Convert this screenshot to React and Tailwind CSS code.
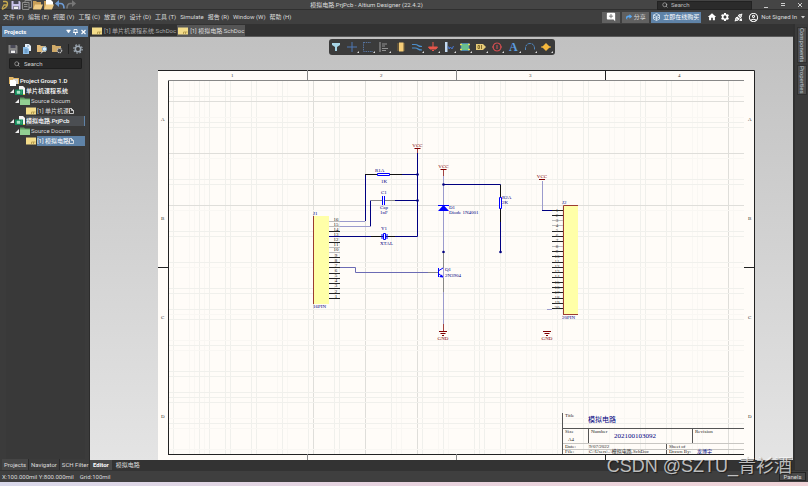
import clsx from 'clsx'
import { LuSearch } from 'react-icons/lu'
import { MdAddComment, MdHome, MdOutlineAccountCircle, MdSettings } from 'react-icons/md'
import { FaShare } from 'react-icons/fa'
import { TbPlugConnectedX } from 'react-icons/tb'

const menus = [
  '文件 (F)',
  '编辑 (E)',
  '视图 (V)',
  '工程 (C)',
  '放置 (P)',
  '设计 (D)',
  '工具 (T)',
  'Simulate',
  '报告 (R)',
  'Window (W)',
  '帮助 (H)'
]

const tree = [
  { type: 'group', label: 'Project Group 1.D' },
  { type: 'project', label: '单片机课程系统' },
  { type: 'folder', label: 'Source Docum' },
  { type: 'sheet', label: '[1] 单片机课' },
  { type: 'project', label: '模拟电路.PrjPcb', current: true },
  { type: 'folder', label: 'Source Docum' },
  { type: 'sheet', label: '[1] 模拟电路', selected: true }
]

const indent = { group: 'pl-[3px]', project: 'pl-[4px]', folder: 'pl-[9px]', sheet: 'pl-[20px]' }

const SaveIcon = ({ color = '#c9c3ea' }) => (
  <svg viewBox="0 0 10 10" className="size-[10px]">
    <path d="M.5 1h8l1 1v7.500h-9z" fill={color} />
    <path d="M2.500 1h5v3h-5zM2.500 6h5v3.500h-5z" fill="#4a4a58" />
    <path d="M3 6.500h4v2.500h-4z" fill="#eee" />
  </svg>
)

const SaveAllIcon = () => (
  <svg viewBox="0 0 10 10" className="size-[10px]" stroke="#8b8b8b" fill="#454545">
    <path d="M3 .5h6.500v7H3z" />
    <path d="M.5 2.500h6.500v7H.5zM2 4.500h3.500M2 6.500h3.500" />
  </svg>
)

const OpenIcon = ({ paper }) => (
  <svg viewBox="0 0 10 10" className="size-[10px]">
    <path d="M0 1h3l1 1h4v7H0z" fill="#c99f58" />
    {paper && <path d="M2 0h5l2 2v4H2z" fill="#fff" />}
    <path d="M2 4.500h8l-2 5H0z" fill="#f0cd88" />
  </svg>
)

const ArrowIcon = ({ redo }) => (
  <svg viewBox="0 0 10 10" className={clsx('size-[10px]', redo && '-scale-x-100')}>
    <path d="M2 3.500h3.500q3.500 0 3.500 5" fill="none" stroke={redo ? '#777' : '#6d9cd6'} strokeWidth="1.600" />
    <path d="M0 3.500 4 0v7z" fill={redo ? '#777' : '#6d9cd6'} />
  </svg>
)

const SheetIcon = () => (
  <svg viewBox="0 0 10 8" className="h-[8px] w-[10px] shrink-0">
    <path d="M0 .5h10v7H0z" fill="#f3dc8a" />
    <path d="M5.500 5h4M5.500 5v2M7.500 5v2" stroke="#a58a3c" strokeWidth=".7" />
  </svg>
)

const TreeIcon = ({ type }) => {
  if (type === 'sheet') return <SheetIcon />
  if (type === 'folder') {
    return (
      <svg viewBox="0 0 10 8" className="h-[8px] w-[10px] shrink-0">
        <path d="M0 .5h4l1 1h5V8H0z" fill="#5f9e62" />
        <path d="M0 2.500h10V8H0z" fill="#93cf92" />
      </svg>
    )
  }
  if (type === 'group') {
    return (
      <svg viewBox="0 0 10 10" className="size-[10px] shrink-0">
        <path d="M0 1h4l1 1h5v6H0z" fill="#e3b766" />
        <path d="M1 4h5l1 1v5H1z" fill="#fff" />
        <path d="M4 3h5v5H7V5L6 4H4z" fill="#d8d8d8" />
      </svg>
    )
  }
  return (
    <svg viewBox="0 0 10 10" className="size-[10px] shrink-0">
      <path d="M4 0h4l2 2v6H4z" fill="#f4f4f4" />
      <path d="M0 3.500h8V9H0z" fill="#128a5a" />
      <path d="M2 5h3v2.500H2zM6 5h1M6 7h1" fill="#a8e0c4" stroke="#a8e0c4" strokeWidth=".5" />
      <path d="M8 8.500h2" stroke="#d8d048" />
    </svg>
  )
}

const Sidebar = () => (
  <aside className="flex w-[90px] shrink-0 flex-col border-r border-[#2d2d2d] bg-[#3b3b3b] pl-[2px]">
    <div className="mt-[2px] mr-[1px] flex h-[11px] items-center bg-[#5f83a8] px-[2px] font-bold text-white">
      <h2 className="flex-1">Projects</h2>
      <svg viewBox="0 0 20 6" className="h-[6px] w-[20px]" stroke="#fff" fill="#fff">
        <path d="M.5 1h4l-2 3z" strokeWidth=".5" />
        <path d="M8 .5h3v3H8zM7 3.500h5M9.500 3.500V6" fill="none" strokeWidth=".9" />
        <path d="m15.500 1 4 4m0-4-4 4" strokeWidth="1.200" />
      </svg>
    </div>
    <div className="mx-[4px] flex flex-1 flex-col bg-[#393939]">
      <div className="mt-[6px] flex h-[11px] items-center justify-between px-[2px]">
        <SaveIcon color="#858585" />
        <svg viewBox="0 0 10 10" className="size-[10px]">
          <path d="M3 0h4l2 2v5H3z" fill="#e8f1fa" />
          <path d="M1 3h4l2 2v5H1z" fill="#8fbfe9" />
          <path d="M2.500 6h3M2.500 8h3M5 2h2" stroke="#33638f" strokeWidth=".7" />
        </svg>
        <svg viewBox="0 0 11 10" className="h-[10px] w-[11px]">
          <path d="M0 1h3l1 1h5v6H0z" fill="#e0b978" />
          <circle cx="7.500" cy="5" r="2.200" fill="#d9efff" stroke="#84aaca" />
          <path d="M6 7 4 9.500" stroke="#ddd" />
        </svg>
        <svg viewBox="0 0 11 10" className="h-[10px] w-[11px]">
          <path d="M0 1h3l1 1h5v6H0z" fill="#d0aa68" />
          <circle cx="7.500" cy="6.500" r="2.200" fill="#444" stroke="#bbb" strokeWidth="1.200" strokeDasharray="1.200 .5" />
        </svg>
        <span className="h-[10px] border-l border-[#222]" />
        <svg viewBox="0 0 10 10" className="size-[10px]" fill="none" stroke="#9da8b3">
          <circle cx="5" cy="5" r="2.700" strokeWidth="1.600" />
          <circle cx="5" cy="5" r="4.200" strokeWidth="1.200" strokeDasharray="1.650 1.650" />
        </svg>
      </div>
      <label className="mx-[3px] mt-[4px] flex h-[11px] items-center gap-[4px] rounded-[1px] border border-[#1d1d1d] bg-[#272727] px-[4px]">
        <LuSearch className="size-[6px] shrink-0" />
        <input
          type="text"
          placeholder="Search"
          aria-label="Search projects"
          className="w-full min-w-0 bg-transparent outline-none placeholder:text-[#d2d2d2]"
        />
      </label>
      <ul className="mt-[7px] overflow-hidden">
        {tree.map((item, i) => (
          <li
            key={i}
            className={clsx('flex h-[10px] items-center gap-[1px] whitespace-nowrap', indent[item.type])}
          >
            {(item.type === 'project' || item.type === 'folder') && (
              <svg viewBox="0 0 4 4" className="size-[4px] shrink-0">
                <path d="M4 0v4H0z" fill="#eee" />
              </svg>
            )}
            <TreeIcon type={item.type} />
            <span
              className={clsx(
                'flex h-full min-w-0 flex-1 items-center overflow-hidden',
                (item.type === 'group' || item.type === 'project') && 'font-medium text-white',
                item.current && 'border-r border-[#5f83a8] bg-[#4b4e52]',
                item.selected && 'bg-[#5f83a8] text-white'
              )}
            >
              {item.label}
              {item.type === 'sheet' && (
                <svg viewBox="0 0 5 6" className="h-[6px] w-[5px] shrink-0" fill="none" stroke="#eee" strokeWidth=".8">
                  <path d="M.5.500h2l2 2v3h-4zM2.500.500v2h2" />
                </svg>
              )}
            </span>
          </li>
        ))}
      </ul>
    </div>
    <div className="flex h-[11px] shrink-0 items-center whitespace-nowrap">
      <button className="h-full border-r border-[#2a2a2a] bg-[#454545] px-[2px]">Projects</button>
      <button className="h-full border-r border-[#2a2a2a] px-[2px]">Navigator</button>
      <button className="h-full px-[2px]">SCH Filter</button>
    </div>
  </aside>
)

const tools = [
  <path key="t" d="M1 1h8v2L6 5v4H4V5L1 3z" fill="#a8d5e6" />,
  <path key="t" d="M5 0v10M0 5h10" stroke="#4f79b5" />,
  <path key="t" d="M.5 0v9.500H10M.5.500H8" fill="none" stroke="#56729c" strokeDasharray="1.500 .8" />,
  <path key="t" d="M1 0v10M3 2h5M3 4h3M3 6.500h6M3 8.500h4" stroke="#919191" strokeWidth="1.200" />,
  <g key="t">
    <path d="M1 2h8M1 4h8M1 6h8M1 8h8" stroke="#9a7a3b" strokeWidth=".8" />
    <path d="M3 .5h4.500v9H3z" fill="#f5cd78" />
  </g>,
  <path key="t" d="M0 2.500h3q2 0 3 1t4 1M0 6h3q2 0 3 1t4 1" fill="none" stroke="#4c8ec9" strokeWidth="1.200" />,
  <path key="t" d="M5 0v5M.5 5h9L8 7H2zM4 8.500h2" fill="#e8564b" stroke="#e8564b" />,
  <g key="t">
    <path d="M1 0h2.500v10H1z" fill="#c2d9f1" />
    <path d="M3.500 5H5v2l1.500-2L8 7l1.500-3" fill="none" stroke="#4777cf" />
  </g>,
  <g key="t">
    <path d="M1 1.500h8v7H1z" fill="#69c08d" stroke="#4d86c9" strokeWidth=".7" />
    <path d="M0 2.500h2M8 2.500h2M0 7.500h2M8 7.500h2" stroke="#e3e05a" strokeWidth="1.500" />
  </g>,
  <g key="t">
    <path d="M0 2h7l3 3-3 3H0z" fill="#e7cc79" />
    <path d="M2 3.500h1.500v3H2zM5.500 3v4" fill="none" stroke="#6d5519" strokeWidth=".8" />
  </g>,
  <path key="t" d="M5 1a4 4 0 1 0 .1 0M5 3v4M0 5h2M8 5h2" fill="none" stroke="#d14d50" strokeWidth="1.100" />,
  <text key="t" x="0" y="9" className="[font-family:'Liberation_Serif',serif] text-[12px] font-bold" fill="#5b9ce0">
    A
  </text>,
  <path key="t" d="M.5 8V6Q1 1.500 5 1.500T9.500 6v2" fill="none" stroke="#5088c0" strokeDasharray="3 .6" />,
  <g key="t">
    <path d="M5 1 9 5 5 9 1 5z" fill="#f5b83d" />
    <path d="M0 5h10" stroke="#f5b83d" />
  </g>
]

const toolNames = [
  'Filter', 'Move', 'Select', 'Align', 'Part', 'Wire', 'Power port', 'Harness',
  'Sheet symbol', 'Port', 'Directive', 'Text', 'Arc', 'Note'
]

const Toolbar = () => (
  <div className="absolute top-[2px] left-1/2 flex h-[16px] w-[226px] -translate-x-1/2 items-center justify-around rounded-[3px] bg-[#3b3b3b]">
    {tools.map((shape, i) => (
      <button key={toolNames[i]} aria-label={toolNames[i]} className="flex items-center">
        <svg viewBox="0 0 13 12" className="h-[12px] w-[13px]">
          <g transform="translate(1 1)">{shape}</g>
          {i > 0 && i !== 4 && <path d="M13 10v2h-2z" fill="#ddd" />}
        </svg>
      </button>
    ))}
  </div>
)

// grid lines: [position, colour]
const faint = '#f9f7f3'
const light = '#f0f0ec'
const major = '#dfdeda'
const columns = [
  [173, light], [189, faint], [194, faint], [199, light], [204, faint], [209, light], [225, light],
  [230, light], [251, light], [256, light], [277, faint], [282, light], [287, faint], [308, light],
  [313, major], [334, light], [339, light], [365, major], [391, light], [396, faint], [401, faint],
  [417, major], [422, light], [438, faint], [443, light], [448, faint], [474, light], [479, light],
  [484, light], [500, light], [505, light], [526, faint], [531, faint], [536, faint], [552, faint],
  [557, light], [562, light], [583, light], [588, light], [609, faint], [614, faint], [624, faint],
  [640, light], [645, light], [666, light], [671, light], [692, faint], [697, faint], [702, faint],
  [728, major], [733, faint]
]
const rows = [
  [96, light], [101, major], [117, faint], [122, light], [127, light], [153, major], [158, faint],
  [179, light], [184, light], [205, major], [210, faint], [231, light], [236, light], [262, light],
  [267, faint], [288, light], [293, light], [309, light], [314, faint], [319, light], [340, faint],
  [345, light], [350, faint], [371, light], [376, light], [392, light], [397, light], [402, light],
  [418, faint], [423, light], [428, faint], [449, faint]
]

const navy = '#000080'
const maroon = '#800000'
const pins = (count, start) => Array.from({ length: count }, (_, i) => start + i * 5.15)

const PowerPort = ({ x, y }) => (
  <g>
    <path d={`M${x - 3} ${y + .5}h6`} stroke={maroon} />
    <text x={x} y={y - 1} textAnchor="middle" fill={maroon}>VCC</text>
  </g>
)

const Ground = ({ x, y }) => (
  <g>
    <path d={`M${x - 4} ${y}h8M${x - 2.5} ${y + 2}h5M${x - 1} ${y + 4}h2`} stroke={maroon} />
    <text x={x} y={y + 8} textAnchor="middle" fill={maroon}>GND</text>
  </g>
)

const Schematic = () => (
  <svg viewBox="90 37 703 423" className="block h-full w-full [font-family:'Liberation_Serif','Noto_Sans_CJK_SC',serif] text-[5px]">
    <path d="M158 70.500h596.500V460H158z" fill="#fffcf8" />
    {columns.map(([x, color]) => (
      <path key={x} d={`M${x + .5} 80V454`} stroke={color} />
    ))}
    {rows.map(([y, color]) => (
      <path key={y} d={`M168 ${y + .5}H744`} stroke={color} />
    ))}
    <g fill="none" stroke="#222">
      <path d="M158 70.500h596.500V460" />
      <path d="M168.500 454V80" />
      <path d="M168 454.500h576M605.500 70v10M605.500 454v6M158 267.500h10M744 267.500h10" />
      <path d="M168 80.500h576M307.500 70v10M456.500 70v10M307.500 454v6M456.500 454v6" stroke="#888" />
    </g>
    <g fill="#333">
      {['1', '2', '3', '4'].map((label, i) => (
        <text key={label} x={231 + i * 149} y="77">{label}</text>
      ))}
      {['A', 'B', 'C', 'D'].map((label, i) => (
        <g key={label}>
          <text x="161" y={121 + i * 99}>{label}</text>
          <text x="748" y={121 + i * 99}>{label}</text>
        </g>
      ))}
    </g>

    {/* wires */}
    <g fill="none" stroke={navy}>
      <path d="M417.500 150v86.500H340M390 174.500h27M370.500 226v-25.500M388 200.500h29M365.500 221v-46.500" />
      <path d="M340 226.500h31M340 221.500h25M443.500 170v160M542.500 181v29M547 309.500h5" stroke="#9b9bcd" />
      <path d="M443 184.500h57.500V252M542 210.500h11" />
      <path d="M340 267.500h15.500v5H435" stroke="#6b6bb4" />
    </g>
    <g fill={navy}>
      <circle cx="417.500" cy="174.500" r="1.300" />
      <circle cx="417.500" cy="200.500" r="1.300" />
      <circle cx="443.500" cy="184.500" r="1.300" />
      <circle cx="443.500" cy="252" r="1.300" />
      <circle cx="500.500" cy="252" r="1.300" />
    </g>
    <g stroke="#111">
      <path d="M365 174.500h12M390 174.500h12M371 236.500h11M387 236.500h8M500.500 185v12M500.500 209v13" />
      <path d="M371 200.500h11M385 200.500h10M428 272.500h10M443.500 253v15M443.500 278v14" stroke="#888" />
    </g>

    {/* parts */}
    <g fill="none" stroke="#0000ff">
      <path d="M377.500 173.500h12v2h-12zM499.500 197.500h2v11h-2zM383.500 233.500h2v6h-2z" fill="#fffcf8" />
      <path d="M382.500 196v9M384.500 196v9M382 234v5M387 234v5" />
      <path d="M438.500 268v9M439 270.500l4-2.500M439 274l4 3M438 205.500h11" />
      <path d="M443.500 205l-5.500 6h11zM443 277.500l-4-.5 3-2.500z" fill="#0000ff" stroke="none" />
    </g>
    <path d="M313 216h16v88h-16zM563 205h15v109h-15z" fill="#ffffa8" />
    <path d="M313.500 216v88M563.500 314V205.500H578M563 314.500h15" fill="none" stroke="#9b3c30" />
    {pins(16, 221.5).map((y, i) => (
      <g key={y}>
        <path d={`M329 ${Math.floor(y) + .5}h11`} stroke={i < 2 || i === 5 || i === 6 ? '#bbb' : i === 3 ? navy : '#222'} />
        <text x="336" y={y - 1} textAnchor="middle" fill="#111">{16 - i}</text>
      </g>
    ))}
    {pins(20, 210.5).map((y, i) => (
      <g key={y}>
        <path d={`M552 ${Math.floor(y) + .5}h11`} stroke={i === 2 || i === 3 || i === 7 ? '#bbb' : '#222'} />
        <text x="557" y={y + 1} textAnchor="middle" fill="#444">{i + 1}</text>
      </g>
    ))}
    <path d="M417.500 149v4M443.500 170v6M443.500 324v7" stroke="#a04040" />
    <PowerPort x={417.5} y={148} />
    <PowerPort x={443.5} y={169} />
    <PowerPort x={542} y={179} />
    <Ground x={443} y={331.5} />
    <Ground x={547} y={331.5} />
    <g fill={navy}>
      <text x="375" y="172">R1A</text>
      <text x="381" y="183">1K</text>
      <text x="381" y="194">C1</text>
      <text x="380" y="209">Cap</text>
      <text x="380" y="214">1nF</text>
      <text x="381" y="230">Y1</text>
      <text x="380" y="245">XTAL</text>
      <text x="313" y="215">J1</text>
      <text x="313" y="308">16PIN</text>
      <text x="449" y="209">D1</text>
      <text x="449" y="214">Diode 1N4001</text>
      <text x="502" y="199">R2A</text>
      <text x="502" y="204">2K</text>
      <text x="445" y="271">Q1</text>
      <text x="445" y="277">2N3904</text>
      <text x="562" y="204">J2</text>
      <text x="562" y="319">20PIN</text>
    </g>

    {/* title block */}
    <path d="M562.500 413v41M562 428.500h182M588.500 429v15M692.500 429v15M666.500 444v10" fill="none" stroke="#555" />
    <path d="M563 443.500h181M563 449.500h181" stroke="#c8c6c2" />
    <g fill="#222">
      <text x="565" y="417">Title</text>
      <text x="565" y="433">Size</text>
      <text x="568" y="441">A4</text>
      <text x="591" y="433">Number</text>
      <text x="695" y="433">Revision</text>
      <text x="565" y="448">Date:</text>
      <text x="589" y="448">9/07/2022</text>
      <text x="669" y="448">Sheet  of</text>
      <text x="565" y="453">File:</text>
      <text x="589" y="453">C:\Users\..\模拟电路.SchDoc</text>
      <text x="669" y="453">Drawn By:</text>
    </g>
    <g fill={navy}>
      <text x="588" y="422" className="text-[7px]">模拟电路</text>
      <text x="614" y="438" className="text-[7px]">202100103092</text>
      <text x="697" y="453" className="text-[5px]">龙博宇</text>
    </g>
  </svg>
)

const App = () => {
  return (
    <div className="relative flex h-screen flex-col overflow-hidden bg-[#3f3f3f] [font-family:Roboto,'Noto_Sans_CJK_SC',sans-serif] text-[6px] leading-[8px] text-[#dcdcdc]">
      <header>
        <div className="grid h-[10px] grid-cols-[1fr_auto_1fr] items-center border-b border-[#303030] bg-[#454545]">
          <div className="flex items-center gap-[1px]">
            <svg viewBox="0 0 10 10" className="size-[10px]" fill="none" stroke="#c5a84e" strokeWidth="1.300">
              <path d="M3 1.500h2.500q2 0 2 2.500T4 8.500 4 5h3" />
            </svg>
            <SaveIcon />
            <SaveAllIcon />
            <OpenIcon />
            <OpenIcon paper />
            <ArrowIcon />
            <ArrowIcon redo />
          </div>
          <h1 className="pr-[75px] whitespace-nowrap">模拟电路.PrjPcb - Altium Designer (22.4.2)</h1>
          <div className="flex items-center justify-end gap-[12px] pr-[6px]">
            <label className="flex h-[9px] w-[95px] items-center gap-[3px] border border-[#222] bg-[#2b2b2b] px-[4px]">
              <LuSearch className="size-[6px] shrink-0" />
              <input
                type="text"
                placeholder="Search"
                aria-label="Search"
                className="w-full min-w-0 bg-transparent outline-none placeholder:text-[#bdbdbd]"
              />
            </label>
            <svg viewBox="0 0 38 6" className="h-[6px] w-[38px]" fill="none" stroke="#ccc">
              <path d="M0 5.500h4M17 1.500h4M17 3.500h4M34 1l4 4m0-4-4 4" />
            </svg>
          </div>
        </div>
        <div className="flex h-[14px] items-center px-[3px]">
          <nav className="flex items-center gap-[4px]">
            {menus.map((item) => (
              <button key={item} className="whitespace-nowrap">{item}</button>
            ))}
          </nav>
          <div className="ml-auto flex items-center gap-[2px] whitespace-nowrap">
            <button aria-label="Comment" className="flex h-[11px] w-[18px] items-center justify-center bg-[#616161] text-white">
              <MdAddComment className="size-[10px]" />
            </button>
            <button className="flex h-[11px] w-[27px] items-center justify-center gap-[2px] bg-[#616161]">
              <FaShare className="size-[6px] text-[#59a6ee]" />
              分享
            </button>
            <button className="flex h-[11px] w-[50px] items-center justify-center gap-[3px] bg-[#5f83a8] text-white">
              <svg viewBox="0 0 7 8" className="h-[8px] w-[7px]" fill="none" stroke="#dce8f3" strokeWidth=".8">
                <path d="m3.500.500 3 1.500v4l-3 1.500L.500 6V2zM.5 2l3 1.500v4M.5 4l3 1.500 3-1.500M3.500 3.500l3-1.500" />
              </svg>
              立即在线购买
            </button>
            <div className="flex items-center gap-[3px] pl-[4px] text-white">
              <MdHome className="size-[10px]" />
              <MdSettings className="size-[10px]" />
              <TbPlugConnectedX className="mx-[1px] size-[9px] stroke-[3px]" />
              <MdOutlineAccountCircle className="ml-[1px] size-[11px]" />
            </div>
            <button className="flex items-center gap-[4px]">
              Not Signed In
              <svg viewBox="0 0 4 3" className="h-[3px] w-[4px]">
                <path d="M0 0h4L2 2.500z" fill="#ccc" />
              </svg>
            </button>
          </div>
        </div>
      </header>

      <div className="flex min-h-0 flex-1">
        <Sidebar />
        <main className="flex min-w-0 flex-1 flex-col">
          <div className="flex h-[13px] shrink-0 items-end border-b border-[#5a5a5a] bg-[#323232] pl-[1px]">
            <button className="flex h-[11px] items-center gap-[2px] px-[1px] whitespace-nowrap text-[#aaa]">
              <SheetIcon />
              [1] 单片机课程系统.SchDoc
            </button>
            <button className="flex h-[11px] items-center gap-[2px] bg-[#555] px-[1px] whitespace-nowrap">
              <SheetIcon />
              [1] 模拟电路.SchDoc
            </button>
          </div>
          <div className="relative min-h-0 flex-1 bg-linear-to-b from-[#c1c1c1] to-[#e4e4e4]">
            <Schematic />
            <Toolbar />
          </div>
          <div className="flex h-[10px] shrink-0 items-center bg-[#333]">
            <button className="h-full bg-[#494949] px-[3px] font-bold text-white">Editor</button>
            <button className="h-full px-[4px]">模拟电路</button>
          </div>
        </main>
        <aside className="flex w-[15px] shrink-0 flex-col items-center gap-[2px] border-l-2 border-[#303030] bg-[#3b3b3b] pt-[3px]">
          <button className="flex h-[36px] w-[10px] items-center justify-center border border-[#303030] bg-[#505050] text-[#b9c4cf] [writing-mode:vertical-rl]">
            Components
          </button>
          <button className="flex h-[30px] w-[10px] items-center justify-center border border-[#303030] bg-[#505050] text-[#b9c4cf] [writing-mode:vertical-rl]">
            Properties
          </button>
        </aside>
      </div>

      <footer>
        <div className="flex h-[12px] items-center gap-[6px] border-t border-[#333] pr-[2px] pl-[2px]">
          <span>X:100.000mil Y:800.000mil</span>
          <span>Grid:100mil</span>
          <button className="ml-auto h-[9px] w-[27px] border border-[#252525] bg-[#494949]">Panels</button>
        </div>
        <div className="h-[4px] bg-linear-to-r from-[#d9d9eb] via-[#e8d3df] to-[#f0d4d8]" />
      </footer>
      <div className="pointer-events-none absolute right-[16px] bottom-[8px] text-[18px] leading-[24px] whitespace-nowrap text-white/70 [font-family:'Liberation_Sans','Noto_Sans_CJK_SC',sans-serif] text-shadow-[1px_1px_1px_#0008]">
        CSDN @SZTU_青衫酒
      </div>
    </div>
  )
}

export default App
